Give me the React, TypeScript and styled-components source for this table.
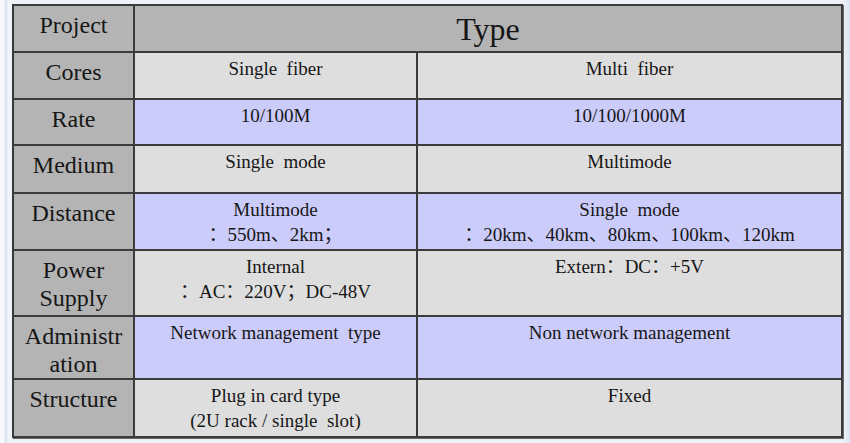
import React from "react";
import styled, { createGlobalStyle } from "styled-components";

const serif = `"Liberation Serif", "Times New Roman", "Noto Sans CJK SC", serif`;

const Global = createGlobalStyle`
  html, body { margin: 0; padding: 0; }
  body {
    width: 850px;
    height: 443px;
    overflow: hidden;
    background: #eef2f7;
    font-family: ${serif};
    color: #161616;
  }
`;

const Frame = styled.div`
  width: 850px;
  height: 443px;
  box-sizing: border-box;
  padding: 4px 7px 5px 12px;
  background:
    linear-gradient(to right, #f6f8fb 0px, #f6f8fb 4px, #dfe7f1 5px, #dfe7f1 7px, #f3f6f9 8px, #eef2f7 12px, #eef2f7 843px, #dbe5f0 850px),
    #eef2f7;
  border-bottom: 5px solid #d6e1ee;
  border-bottom-width: 0;
`;

const Table = styled.div`
  display: grid;
  grid-template-columns: 119px 281px 423px;
  grid-template-rows: 45px 45px 44px 46px 55px 64px 61px 56px;
  gap: 2px;
  padding: 2px;
  background: #3b3b3b;
  width: 831px;
  box-sizing: border-box;
  font-family: ${serif};
  box-shadow: 1px 1px 0 #6a6a6a;
`;

const HeadCell = styled.div<{ $span?: number; $big?: boolean }>`
  grid-column: span ${(p) => p.$span ?? 1};
  background: #b4b4b4;
  text-align: center;
  font-family: ${serif};
  font-size: ${(p) => (p.$big ? "32px" : "24px")};
  line-height: ${(p) => (p.$big ? "38px" : "28px")};
  padding-top: ${(p) => (p.$big ? "4px" : "5px")};
  box-sizing: border-box;
`;

const LabelCell = styled.div`
  background: #b4b4b4;
  text-align: center;
  font-family: ${serif};
  font-size: 24px;
  line-height: 28px;
  padding-top: 5px;
  box-sizing: border-box;
`;

const DataCell = styled.div<{ $blue: boolean }>`
  background: ${(p) => (p.$blue ? "#ccccfb" : "#dedede")};
  text-align: center;
  font-family: ${serif};
  font-size: 19px;
  line-height: 25px;
  padding-top: 3px;
  box-sizing: border-box;
  white-space: pre;
`;

type Row = { label: string[]; a: string[]; b: string[] };

const rows: Row[] = [
  { label: ["Cores"], a: ["Single  fiber"], b: ["Multi  fiber"] },
  { label: ["Rate"], a: ["10/100M"], b: ["10/100/1000M"] },
  { label: ["Medium"], a: ["Single  mode"], b: ["Multimode"] },
  {
    label: ["Distance"],
    a: ["Multimode", "：550m、2km；"],
    b: ["Single  mode", "：20km、40km、80km、100km、120km"],
  },
  {
    label: ["Power", "Supply"],
    a: ["Internal", "：AC：220V；DC-48V"],
    b: ["Extern：DC：+5V"],
  },
  {
    label: ["Administr", "ation"],
    a: ["Network management  type"],
    b: ["Non network management"],
  },
  {
    label: ["Structure"],
    a: ["Plug in card type", "(2U rack / single  slot)"],
    b: ["Fixed"],
  },
];

const Lines = ({ lines }: { lines: string[] }) => (
  <>
    {lines.map((l, i) => (
      <div key={i}>{l}</div>
    ))}
  </>
);

export default function App() {
  return (
    <>
      <Global />
      <Frame>
        <Table>
          <HeadCell>Project</HeadCell>
          <HeadCell $span={2} $big>
            Type
          </HeadCell>
          {rows.map((r, i) => {
            const blue = i % 2 === 1;
            return (
              <React.Fragment key={i}>
                <LabelCell>
                  <Lines lines={r.label} />
                </LabelCell>
                <DataCell $blue={blue}>
                  <Lines lines={r.a} />
                </DataCell>
                <DataCell $blue={blue}>
                  <Lines lines={r.b} />
                </DataCell>
              </React.Fragment>
            );
          })}
        </Table>
      </Frame>
    </>
  );
}
